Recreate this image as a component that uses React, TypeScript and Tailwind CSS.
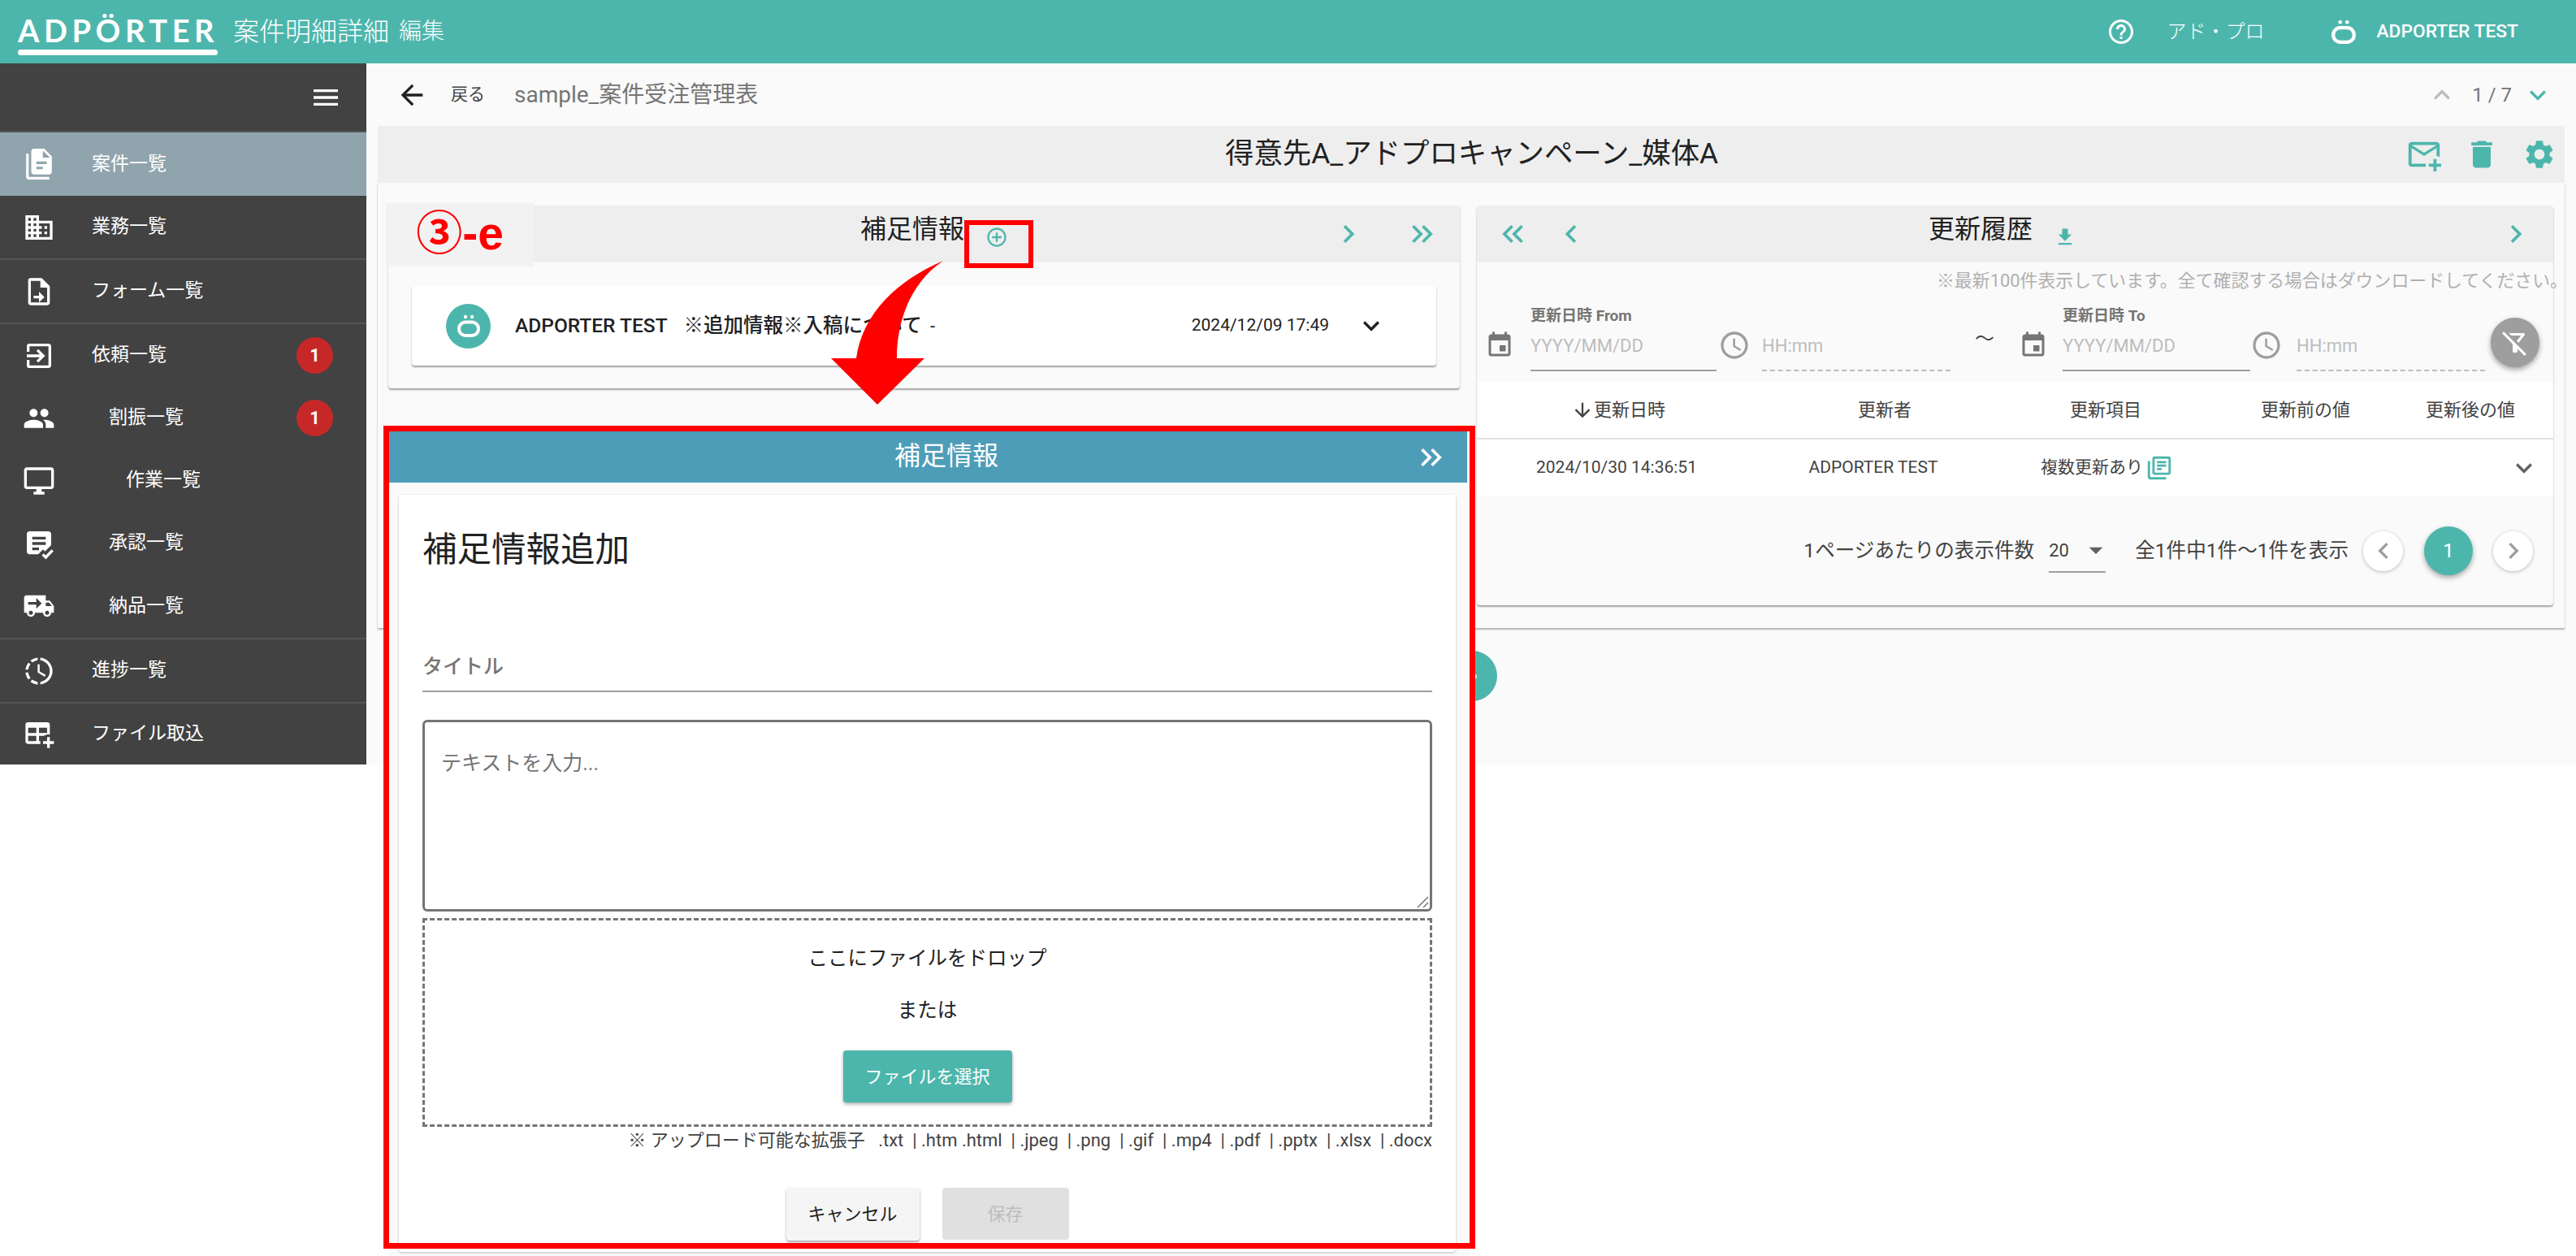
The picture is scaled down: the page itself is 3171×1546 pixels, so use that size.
import React from "react";
import {
  MdArrowBack, MdKeyboardArrowUp, MdKeyboardArrowDown, MdKeyboardArrowRight, MdKeyboardArrowLeft,
  MdKeyboardDoubleArrowRight, MdKeyboardDoubleArrowLeft, MdDelete, MdSettings, MdFileDownload,
  MdAddCircleOutline, MdEvent, MdAccessTime, MdOutlineFilterAltOff, MdOutlineLibraryBooks, MdArrowDownward,
  MdHelpOutline, MdBusiness, MdExitToApp, MdPeople, MdMenu, MdArrowDropDown,
} from "react-icons/md";

function P({ d, className }: { d: string; className?: string }) {
  return (
    <svg viewBox="0 0 24 24" fill="currentColor" fillRule="evenodd" className={className}>
      <path d={d} />
    </svg>
  );
}

const ic = {
  docs: "M4 4v18h16v2H4c-1.1 0-2-.9-2-2V4h2zM8 0h8l6 6v12c0 1.1-.9 2-2 2H8c-1.1 0-2-.9-2-2V2c0-1.1.9-2 2-2zm7 1.5V7h5.5L15 1.5zM10 10v2h8v-2h-8zm0 4v2h5v-2h-5z",
  form: "M14 2H6a2 2 0 0 0-2 2v16a2 2 0 0 0 2 2h12a2 2 0 0 0 2-2V8l-6-6zm4 18H6V4h7v5h5v11zM12 12v3H8v2h4v3l4-4-4-4z",
  desktop: "M21 2H3c-1.1 0-2 .9-2 2v12c0 1.1.9 2 2 2h7v2H8v2h8v-2h-2v-2h7c1.1 0 2-.9 2-2V4c0-1.1-.9-2-2-2zm0 14H3V4h18v12z",
  truck: "M3 4A2 2 0 0 0 1 6V17H3A3 3 0 0 0 6 20A3 3 0 0 0 9 17H15A3 3 0 0 0 18 20A3 3 0 0 0 21 17H23V12L20 8H17V4M10 6L14 10L10 14V11H4V9H10M17 9.5H19.5L21.47 12H17M6 15.5A1.5 1.5 0 0 1 7.5 17A1.5 1.5 0 0 1 6 18.5A1.5 1.5 0 0 1 4.5 17A1.5 1.5 0 0 1 6 15.5M18 15.5A1.5 1.5 0 0 1 19.5 17A1.5 1.5 0 0 1 18 18.5A1.5 1.5 0 0 1 16.5 17A1.5 1.5 0 0 1 18 15.5Z",
  progress: "M13,2.03V2.05L13,4.05C17.39,4.59 20.5,8.58 19.96,12.97C19.5,16.61 16.64,19.5 13,19.93V21.93C18.5,21.38 22.5,16.5 21.95,11C21.5,6.25 17.73,2.5 13,2.03M11,2.06C9.05,2.25 7.19,3 5.67,4.26L7.1,5.74C8.22,4.84 9.57,4.26 11,4.06V2.06M4.26,5.67C3,7.19 2.25,9.04 2.05,11H4.05C4.24,9.58 4.8,8.23 5.69,7.1L4.26,5.67M2.06,13C2.26,14.96 3.03,16.81 4.27,18.33L5.69,16.9C4.81,15.77 4.24,14.42 4.06,13H2.06M7.1,18.37L5.67,19.74C7.18,21 9.04,21.79 11,22V20C9.58,19.82 8.23,19.25 7.1,18.37M12.5,7V12.25L17,14.92L16.25,16.15L11,13V7H12.5Z",
  tablePlus: "M18,14H20V17H23V19H20V22H18V19H15V17H18V14M4,3H18A2,2 0 0,1 20,5V12.08C18.45,11.82 16.92,12.18 15.68,13H12V17H13.08C12.97,17.68 12.97,18.35 13.08,19H4A2,2 0 0,1 2,17V5A2,2 0 0,1 4,3M4,7V11H10V7H4M12,7V11H18V7H12M4,13V17H10V13H4Z",
  mailPlus: "M13 19C13 18.66 13.04 18.33 13.09 18H4V8L12 13L20 8V13.09C20.72 13.21 21.39 13.46 22 13.81V6C22 4.9 21.1 4 20 4H4C2.9 4 2 4.9 2 6V18C2 19.1 2.9 20 4 20H13.09C13.04 19.67 13 19.34 13 19M20 6L12 11L4 6H20M20 15V18H23V20H20V23H18V20H15V18H18V15H20Z",
  approve: "M5 3h14c1.1 0 2 .9 2 2v8.2l-4.6 4.6-1.4-1.4-3.6 3.6H5c-1.1 0-2-.9-2-2V5c0-1.1.9-2 2-2zm2 4v2h10V7H7zm0 4v2h10v-2H7zm0 4v2h5v-2H7z",
};

function Adp({ className }: { className?: string }) {
  return (
    <svg viewBox="0 0 30 28" fill="none" className={className}>
      <rect x="3" y="9.5" width="24" height="16.5" rx="8" stroke="currentColor" strokeWidth="4" />
      <circle cx="11" cy="3" r="2.2" fill="currentColor" />
      <circle cx="19" cy="3" r="2.2" fill="currentColor" />
    </svg>
  );
}

function NavRow({ label, icon, indent = "ml-[113px]", h = "h-[79px]", border, badge }: { label: string; icon: React.ReactNode; indent?: string; h?: string; border?: boolean; badge?: boolean }) {
  return (
    <div className={`${h} flex items-center shrink-0 relative ${border ? "border-b-2 border-[#555555]" : ""}`}>
      <div className="absolute left-[30px] w-[36px] h-[36px] flex items-center justify-center text-white">{icon}</div>
      <span className={`${indent} text-[23px] text-white`}>{label}</span>
      {badge && (
        <span className="ml-auto mr-[41px] w-[45px] h-[45px] rounded-full bg-[#c62828] text-white text-[22px] font-bold flex items-center justify-center">1</span>
      )}
    </div>
  );
}

function Sidebar() {
  return (
    <aside className="w-[451px] h-[863px] bg-[#424242] flex flex-col shrink-0">
      <div className="h-[85px] flex items-center justify-end pr-[30px] text-white shrink-0 border-b-2 border-[#555555]">
        <MdMenu className="w-[40px] h-[40px]" />
      </div>
      <NavRow label="案件一覧" h="h-[78px] bg-[#90a4ae]" icon={<P d={ic.docs} className="w-[38px] h-[40px] shrink-0" />} />
      <NavRow label="業務一覧" border icon={<MdBusiness className="w-[40px] h-[40px] shrink-0" />} />
      <NavRow label="フォーム一覧" border icon={<P d={ic.form} className="w-[40px] h-[40px] shrink-0" />} />
      <NavRow label="依頼一覧" h="h-[77px]" badge icon={<MdExitToApp className="w-[40px] h-[40px] shrink-0" />} />
      <NavRow label="割振一覧" h="h-[77px]" indent="ml-[134px]" badge icon={<MdPeople className="w-[40px] h-[40px] shrink-0" />} />
      <NavRow label="作業一覧" h="h-[77px]" indent="ml-[155px]" icon={<P d={ic.desktop} className="w-[40px] h-[40px] shrink-0" />} />
      <NavRow label="承認一覧" h="h-[77px]" indent="ml-[134px]" icon={
        <svg viewBox="0 0 24 24" className="w-[40px] h-[40px] shrink-0"><path fill="currentColor" fillRule="evenodd" d={ic.approve} /><path d="M14.8 20l2.2 2.2 5-5.2" fill="none" stroke="currentColor" strokeWidth="2" /></svg>
      } />
      <NavRow label="納品一覧" h="h-[80px]" indent="ml-[134px]" border icon={<P d={ic.truck} className="w-[40px] h-[40px] shrink-0" />} />
      <NavRow label="進捗一覧" border icon={<P d={ic.progress} className="w-[40px] h-[40px] shrink-0" />} />
      <NavRow label="ファイル取込" h="h-[75px]" icon={<P d={ic.tablePlus} className="w-[40px] h-[40px] shrink-0" />} />
    </aside>
  );
}

function Field({ label, placeholder, w, dashed }: { label?: string; placeholder: string; w: string; dashed?: boolean }) {
  return (
    <div className={`${w} shrink-0 flex flex-col`}>
      <div className="h-[38px] flex items-center text-[19px] font-bold text-[#757575] whitespace-nowrap">{label}</div>
      <div className={`h-[49px] pb-[12px] flex items-center text-[22px] text-[#bdbdbd] border-b-2 ${dashed ? "border-dashed border-[#bdbdbd]" : "border-[#9e9e9e]"}`}>{placeholder}</div>
    </div>
  );
}

function Panels() {
  return (
    <div className="flex-1 relative">
      <div className="h-[548px] bg-[#fafafa] shadow-[0_2px_2px_rgba(0,0,0,0.3)] flex pl-[13px] pt-[28px] gap-[21px]">
        {/* 補足情報 */}
        <section className="w-[1319px] h-[225px] rounded-[4px] bg-[#fafafa] shadow-[0_2px_2px_rgba(0,0,0,0.35)] flex flex-col shrink-0">
          <div className="h-[70px] bg-[#eeeeee] flex items-center pl-[581px] pr-[24px] text-[#4db6ac] rounded-t-[4px]">
            <span className="text-[32px] text-[#212121] pb-[12px] leading-none">補足情報</span>
            <MdAddCircleOutline className="w-[28px] h-[28px] ml-[26px] mt-[8px]" />
            <MdKeyboardArrowRight className="w-[44px] h-[44px] ml-auto" />
            <MdKeyboardDoubleArrowRight className="w-[44px] h-[44px] ml-[47px]" />
          </div>
          <div className="mt-[29px] mx-[29px] h-[98px] bg-white rounded-[4px] shadow-[0_2px_2px_rgba(0,0,0,0.35)] flex items-center pl-[42px] pr-[60px]">
            <span className="w-[55px] h-[55px] rounded-full bg-[#4db6ac] flex items-center justify-center text-white">
              <Adp className="w-[30px] h-[28px]" />
            </span>
            <span className="ml-[30px] text-[24.5px] font-medium text-[#212121] whitespace-nowrap">ADPORTER TEST</span>
            <span className="ml-[20px] text-[24.5px] font-medium text-[#212121] whitespace-nowrap">※追加情報※入稿について</span>
            <span className="ml-[10px] text-[22px] text-[#212121]">-</span>
            <span className="ml-auto text-[21px] text-[#212121] whitespace-nowrap">2024/12/09 17:49</span>
            <MdKeyboardArrowDown className="w-[40px] h-[40px] ml-[32px] text-[#212121]" />
          </div>
        </section>
        {/* 更新履歴 */}
        <section className="w-[1325px] h-[492px] rounded-[4px] bg-[#fafafa] shadow-[0_2px_2px_rgba(0,0,0,0.35)] flex flex-col shrink-0">
          <div className="h-[70px] bg-[#eeeeee] flex items-center pl-[22px] pr-[24px] text-[#4db6ac] rounded-t-[4px] shrink-0">
            <MdKeyboardDoubleArrowLeft className="w-[44px] h-[44px]" />
            <MdKeyboardArrowLeft className="w-[44px] h-[44px] ml-[28px]" />
            <span className="ml-[418px] text-[32px] text-[#212121] pb-[12px] leading-none">更新履歴</span>
            <MdFileDownload className="w-[28px] h-[28px] ml-[26px] mt-[8px]" />
            <MdKeyboardArrowRight className="w-[44px] h-[44px] ml-auto" />
          </div>
          <div className="h-[47px] flex items-center justify-end pr-[10px] text-[21.9px] text-[#b0b0b0] shrink-0 whitespace-nowrap">
            <span className="-mr-[28px]">※最新100件表示しています。全て確認する場合はダウンロードしてください。</span>
          </div>
          <div className="h-[87px] flex items-end pl-[10px] shrink-0">
            <MdEvent className="w-[36px] h-[40px] mb-[12px] text-[#757575] shrink-0" />
            <div className="w-[20px] shrink-0" />
            <Field label="更新日時 From" placeholder="YYYY/MM/DD" w="w-[229px]" />
            <MdAccessTime className="w-[40px] h-[42px] mb-[11px] ml-[2px] text-[#9e9e9e] shrink-0" />
            <div className="w-[14px] shrink-0" />
            <Field placeholder="HH:mm" w="w-[232px]" dashed />
            <div className="w-[84px] shrink-0 text-center text-[24px] text-[#424242] mb-[22px]">〜</div>
            <MdEvent className="w-[36px] h-[40px] mb-[12px] text-[#757575] shrink-0" />
            <div className="w-[18px] shrink-0" />
            <Field label="更新日時 To" placeholder="YYYY/MM/DD" w="w-[231px]" />
            <MdAccessTime className="w-[40px] h-[42px] mb-[11px] text-[#9e9e9e] shrink-0" />
            <div className="w-[17px] shrink-0" />
            <Field placeholder="HH:mm" w="w-[232px]" dashed />
            <span className="ml-[7px] mb-[5px] w-[60px] h-[61px] rounded-full bg-[#9e9e9e] flex items-center justify-center text-white shadow-[0_3px_6px_rgba(0,0,0,0.35)] shrink-0">
              <MdOutlineFilterAltOff className="w-[36px] h-[36px]" />
            </span>
          </div>
          <div className="mt-[13px] h-[71px] bg-white border-b-2 border-[#e0e0e0] flex items-center text-[22px] text-[#424242] shrink-0">
            <div className="w-[344px] flex items-center justify-center pl-[4px]"><MdArrowDownward className="w-[28px] h-[28px]" />更新日時</div>
            <div className="w-[316px] text-center">更新者</div>
            <div className="w-[228px] text-center">更新項目</div>
            <div className="w-[264px] text-center">更新前の値</div>
            <div className="w-[142px] text-center">更新後の値</div>
          </div>
          <div className="h-[70px] bg-white flex items-center text-[21px] text-[#424242] shrink-0">
            <div className="w-[344px] text-center">2024/10/30 14:36:51</div>
            <div className="w-[316px] text-center pr-[28px] whitespace-nowrap">ADPORTER TEST</div>
            <div className="w-[228px] flex items-center pl-[34px] whitespace-nowrap">複数更新あり<MdOutlineLibraryBooks className="w-[34px] h-[34px] ml-[3px] text-[#4db6ac]" /></div>
            <div className="flex-1 flex justify-end pr-[16px]"><MdKeyboardArrowDown className="w-[40px] h-[40px] text-[#616161]" /></div>
          </div>
          <div className="flex-1 flex items-center justify-end pr-[25px] text-[24.6px] text-[#424242] whitespace-nowrap">
            <span>1ページあたりの表示件数</span>
            <div className="ml-[18px] w-[70px] h-[54px] border-b-2 border-[#9e9e9e] flex items-center justify-between">
              <span className="text-[22px]">20</span>
              <MdArrowDropDown className="w-[40px] h-[40px] text-[#616161] -mr-[8px]" />
            </div>
            <span className="ml-[36px]">全1件中1件～1件を表示</span>
            <span className="ml-[18px] w-[49px] h-[49px] rounded-full bg-white shadow-[0_1px_4px_rgba(0,0,0,0.25)] flex items-center justify-center text-[#9e9e9e]"><MdKeyboardArrowLeft className="w-[40px] h-[40px]" /></span>
            <span className="ml-[26px] w-[60px] h-[60px] rounded-full bg-[#4db6ac] shadow-[0_3px_6px_rgba(0,0,0,0.35)] flex items-center justify-center text-white text-[24px]">1</span>
            <span className="ml-[25px] w-[49px] h-[49px] rounded-full bg-white shadow-[0_1px_4px_rgba(0,0,0,0.25)] flex items-center justify-center text-[#9e9e9e]"><MdKeyboardArrowRight className="w-[40px] h-[40px]" /></span>
          </div>
        </section>
      </div>
      <span className="absolute left-[1316px] top-[576px] w-[62px] h-[62px] rounded-full bg-[#4db6ac] flex items-center justify-center text-white text-[40px] font-bold">-</span>
    </div>
  );
}

function Popup() {
  return (
    <div className="absolute left-[479px] top-[531px] w-[1331px] h-[1015px] bg-[#fafafa] overflow-hidden">
      <div className="w-[1327px] h-[63px] bg-[#4e9db8] flex items-center text-white relative">
        <span className="ml-[622px] text-[32px] leading-none pb-[4px]">補足情報</span>
        <MdKeyboardDoubleArrowRight className="w-[44px] h-[44px] ml-auto mr-[22px]" />
      </div>
      <div className="ml-[12px] mt-[15px] w-[1301px] h-[932px] bg-white rounded-[4px] shadow-[0_1px_3px_rgba(0,0,0,0.25)] px-[29px] flex flex-col">
        <div className="h-[136px] flex items-center text-[42.5px] text-[#212121] leading-none">補足情報追加</div>
        <div className="h-[107px] flex items-end pb-[11px] border-b-2 border-[#9e9e9e] text-[25px] font-medium text-[#757575]">タイトル</div>
        <div className="relative mt-[34px] h-[236px]">
          <textarea
            placeholder="テキストを入力..."
            className="h-full w-full block resize-none rounded-[6px] border-[3px] border-[#757575] px-[20px] pt-[32px] text-[25px] text-[#424242] placeholder:text-[#757575] outline-none"
          />
          <svg className="absolute right-[4px] bottom-[4px]" width="16" height="16" viewBox="0 0 16 16" fill="none" stroke="#757575" strokeWidth="1.5">
            <path d="M2 15L15 2M9 15L15 9" />
          </svg>
        </div>
        <div className="mt-[8px] h-[257px] border-[3px] border-dashed border-[#757575] flex flex-col items-center text-[24.5px] text-[#212121]">
          <div className="mt-[32px] leading-[30px]">ここにファイルをドロップ</div>
          <div className="mt-[34px] leading-[30px]">または</div>
          <div className="mt-[34px] w-[208px] h-[64px] rounded-[4px] bg-[#4db6ac] text-white text-[22px] shadow-[0_2px_4px_rgba(0,0,0,0.35)] flex items-center justify-center">ファイルを選択</div>
        </div>
        <div className="mt-[4px] h-[26px] text-right text-[22px] leading-[26px] text-[#424242] whitespace-nowrap">※ アップロード可能な拡張子&nbsp;&nbsp;&nbsp;.txt &nbsp;| .htm .html &nbsp;| .jpeg &nbsp;| .png &nbsp;| .gif &nbsp;| .mp4 &nbsp;| .pdf &nbsp;| .pptx &nbsp;| .xlsx &nbsp;| .docx</div>
        <div className="mt-[45px] flex justify-center gap-[28px]">
          <div className="w-[164px] h-[65px] rounded-[4px] bg-[#f5f5f5] text-[22px] text-[#212121] shadow-[0_2px_3px_rgba(0,0,0,0.35)] flex items-center justify-center">キャンセル</div>
          <div className="w-[156px] h-[64px] rounded-[4px] bg-[#e0e0e0] text-[22px] text-[#bdbdbd] flex items-center justify-center">保存</div>
        </div>
      </div>
    </div>
  );
}

export default function App() {
  return (
    <div className="relative w-[3171px] h-[1546px] overflow-hidden bg-white font-['Roboto','Noto_Sans_CJK_JP',sans-serif]">
      <header className="h-[78px] bg-[#4db6ac] flex items-center text-white">
        <div className="ml-[22px] w-[246px] flex flex-col">
          <span className="text-[38px] leading-[42px] mt-[6px] font-bold tracking-[5.6px] whitespace-nowrap font-['Lato',sans-serif]">ADPÖRTER</span>
          <span className="h-[7px] mt-[3px] rounded-full bg-white" />
        </div>
        <span className="ml-[19px] text-[32px] font-light">案件明細詳細</span>
        <span className="ml-[12px] text-[28px] font-light">編集</span>
        <MdHelpOutline className="w-[36px] h-[36px] ml-auto" />
        <span className="ml-[38px] text-[24px] font-light">アド・プロ</span>
        <Adp className="ml-[82px] w-[32px] h-[30px]" />
        <span className="ml-[24px] mr-[71px] text-[22.8px] font-medium whitespace-nowrap">ADPORTER TEST</span>
      </header>
      <div className="flex">
        <Sidebar />
        <main className="w-[2720px] h-[863px] bg-[#fafafa] flex flex-col pl-[14px] pr-[14px]">
          <div className="h-[77px] flex items-center shrink-0">
            <MdArrowBack className="w-[40px] h-[40px] text-[#212121] ml-[22px]" />
            <span className="ml-[28px] text-[21px] text-[#424242]">戻る</span>
            <span className="ml-[36px] text-[28px] text-[#757575]">sample_案件受注管理表</span>
            <MdKeyboardArrowUp className="ml-auto w-[40px] h-[40px] text-[#bdbdbd]" />
            <span className="ml-[17px] text-[24px] text-[#757575] whitespace-nowrap">1 / 7</span>
            <MdKeyboardArrowDown className="ml-[12px] mr-[13px] w-[40px] h-[40px] text-[#4db6ac]" />
          </div>
          <div className="h-[70px] bg-[#eeeeee] flex items-center shrink-0 text-[#4db6ac]">
            <span className="ml-[1043px] text-[35.4px] text-[#212121] whitespace-nowrap">得意先A_アドプロキャンペーン_媒体A</span>
            <P d={ic.mailPlus} className="ml-auto w-[46px] h-[46px]" />
            <MdDelete className="ml-[26px] w-[44px] h-[44px]" />
            <MdSettings className="ml-[28px] mr-[10px] w-[42px] h-[42px]" />
          </div>
          <Panels />
        </main>
      </div>
      <Popup />

      {/* annotations */}
      <div className="absolute left-[475px] top-[250px] w-[182px] h-[78px] bg-[#f2f2f2] flex items-center justify-center text-[#ff0000] text-[57px] font-bold pb-[3px] font-['Liberation_Sans','Noto_Sans_CJK_JP',sans-serif]">③-e</div>
      <div className="absolute left-[1187px] top-[271px] w-[85px] h-[59px] border-[6px] border-[#ff0000]" />
      <svg className="absolute left-[1020px] top-[318px]" width="145" height="182" viewBox="1020 318 145 182" fill="#ff0000">
        <path d="M1161 321C1105 345 1062 385 1054 441H1023L1080 498L1138 441H1104C1104 400 1118 350 1161 321Z" />
      </svg>
      <div className="absolute left-[472px] top-[524px] w-[1344px] h-[1013px] border-[7px] border-[#ff0000]" />
    </div>
  );
}
